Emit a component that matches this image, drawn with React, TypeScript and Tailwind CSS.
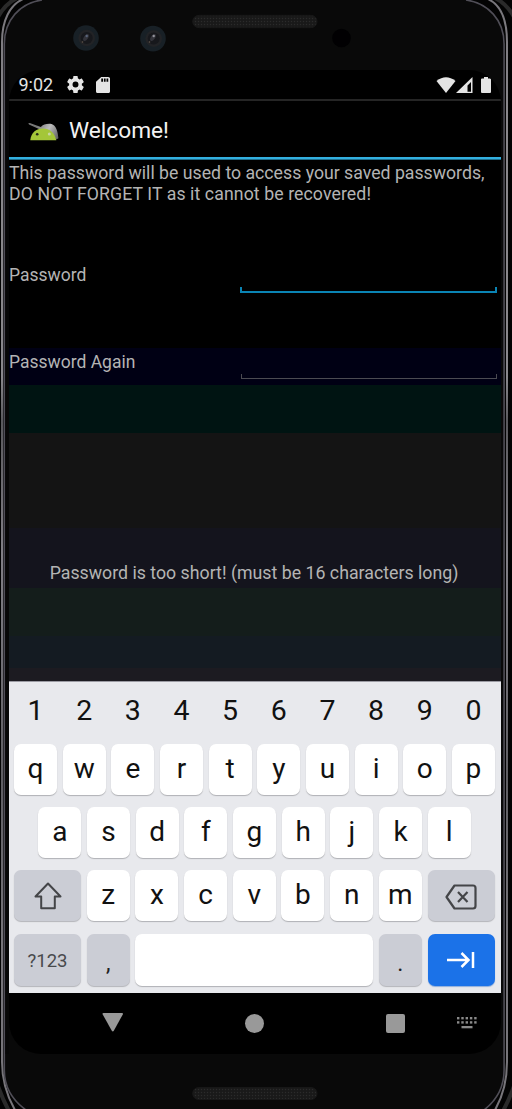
import React from "react";

function Frame() {
  return (
    <svg className="absolute inset-0" width="512" height="1109" viewBox="0 0 512 1109" fill="none">
      <defs>
        <linearGradient id="side" x1="0" y1="0" x2="0" y2="1109" gradientUnits="userSpaceOnUse">
          <stop offset="0" stopColor="#77757a" />
          <stop offset=".1" stopColor="#8a888c" />
          <stop offset=".34" stopColor="#8a888c" />
          <stop offset=".38" stopColor="#5a595d" />
          <stop offset=".5" stopColor="#828086" />
          <stop offset=".7" stopColor="#5f5e63" />
          <stop offset=".85" stopColor="#77757a" />
          <stop offset="1" stopColor="#77757a" />
        </linearGradient>
        <pattern id="mesh" width="3" height="3" patternUnits="userSpaceOnUse">
          <rect width="3" height="3" fill="#1b1b1b" />
          <rect width="1" height="1" fill="#2b2b2b" />
          <rect x="1.5" y="1.5" width="1" height="1" fill="#121212" />
        </pattern>
      </defs>
      <rect width="512" height="1109" fill="#030303" />
      <path d="M17-2Q5 4-2 17M495-2Q507 4 514 17M-2 1086Q3 1100 9 1111M514 1086Q509 1100 503 1111" stroke="#2a2a2a" strokeWidth="4" />
      <rect x="4" y="-0.5" width="500.500" height="1116" rx="44" fill="#090909" />
      <path d="M23-1C10 5 2 20 2 42V1062C2 1080 7 1096 15 1110" stroke="url(#side)" strokeWidth="2" />
      <path d="M488-1C501 5 507 20 507 42V1062C507 1080 503 1096 495 1110" stroke="url(#side)" strokeWidth="2" />
      <path d="M42 0C20 3 4.300 20 4.300 44V1070C4.300 1087 12 1100 26 1110M466 0C488 3 504.100 20 504.100 44V1070C504.100 1087 497 1100 484 1110" stroke="#504e57" strokeWidth="1.600" />
      <rect x="5.5" y="70" width="3.5" height="984" fill="#070707" />
      {[86, 153].map((x, i) => (
        <g key={x}>
          <circle cx={x} cy={38 + i * 0.6} r="12.8" fill="#182026" />
          <circle cx={x + 0.7} cy={38 + i * 0.6} r="8.3" fill="#222326" />
          <circle cx={x + 0.7} cy={38 + i * 0.6} r="6" fill="#17181c" />
          <ellipse cx={x} cy="37.5" rx="4" ry="2" fill="#34343b" transform={`rotate(-55 ${x} 37.5)`} />
          <circle cx={x + 0.7} cy="36" r="1.2" fill={i ? "#92929a" : "#59647a"} />
          <circle cx={x - 3.5} cy="42" r=".8" fill="#65584d" />
        </g>
      ))}
      <circle cx="341.5" cy="38" r="9.3" fill="#010002" />
      <rect x="192.7" y="15.3" width="124.3" height="12.4" rx="6.2" fill="url(#mesh)" stroke="#171717" />
      <rect x="192.7" y="1087.5" width="124.3" height="12" rx="6" fill="url(#mesh)" stroke="#171717" />
    </svg>
  );
}

function StatusBar() {
  return (
    <div className="flex h-[29px] shrink-0 items-center pl-[9.500px] pr-[10px]">
      <span className="w-[48px] text-[18px] leading-[30px] text-[#e4e4e4]">9:02</span>
      <svg width="17" height="17" viewBox="2 2 20 20" fill="#e4e4e4">
        <path d="M19.43 12.98c.04-.32.07-.64.07-.98s-.03-.66-.07-.98l2.11-1.65c.19-.15.24-.42.12-.64l-2-3.46c-.12-.22-.39-.3-.61-.22l-2.49 1c-.52-.4-1.08-.73-1.69-.98l-.38-2.65A.49.49 0 0 0 14 2h-4c-.25 0-.46.18-.49.42l-.38 2.65c-.61.25-1.17.59-1.69.98l-2.49-1c-.23-.09-.49 0-.61.22l-2 3.46c-.13.22-.07.49.12.64l2.11 1.65c-.04.32-.07.65-.07.98s.03.66.07.98l-2.11 1.65c-.19.15-.24.42-.12.64l2 3.46c.12.22.39.3.61.22l2.49-1c.52.4 1.08.73 1.69.98l.38 2.65c.03.24.24.42.49.42h4c.25 0 .46-.18.49-.42l.38-2.65c.61-.25 1.17-.59 1.69-.98l2.49 1c.23.09.49 0 .61-.22l2-3.46c.12-.22.07-.49-.12-.64l-2.11-1.65zM12 15.500a3.500 3.500 0 1 1 0-7 3.500 3.500 0 0 1 0 7z" />
      </svg>
      <svg className="ml-[12.500px]" width="14" height="16" viewBox="4 2 16 20" preserveAspectRatio="none" fill="#e4e4e4">
        <path d="M18 2h-8L4.020 8 4 20c0 1.100.9 2 2 2h12c1.100 0 2-.9 2-2V4c0-1.100-.9-2-2-2zm-6 6h-2V4h2v4zm3 0h-2V4h2v4zm3 0h-2V4h2v4z" />
      </svg>
      <span className="flex-1" />
      <svg className="-ml-px" width="20" height="16" viewBox="0 0 20 16" fill="#e4e4e4">
        <path d="M.5 4Q10-3.500 19.500 4L10 16Z" />
      </svg>
      <svg width="17" height="16" viewBox="0 0 17 16" fill="#e4e4e4">
        <path fillRule="evenodd" d="M0 16L16.500 0v16Zm11.500-1.200h3.500V5l-3.500 3.500Z" />
      </svg>
      <svg className="ml-[8.500px]" width="10" height="16" viewBox="0 0 10 16" fill="#e4e4e4">
        <path d="M3 0h4v1.600h2q1 0 1 1V15q0 1-1 1H1q-1 0-1-1V2.600q0-1 1-1h2Z" />
      </svg>
    </div>
  );
}

function AppIcon() {
  return (
    <svg className="mt-[6px]" width="32" height="20" viewBox="0 0 32 20">
      <defs>
        <linearGradient id="cap" x1="10" y1="2" x2="30" y2="14" gradientUnits="userSpaceOnUse">
          <stop stopColor="#777" />
          <stop offset=".5" stopColor="#bcbcbc" />
          <stop offset="1" stopColor="#686868" />
        </linearGradient>
      </defs>
      <path d="M.3 1.200 1.800 1l11 4C15 2.300 19 1.400 23.500 1.900c4.500 1.300 6.400 7 6.900 14.300l-2 1.400L17 8 11 7 1 2.500Z" fill="url(#cap)" />
      <path d="M2.300 18.300C3 11 8 6.600 15 6.600s11.500 4.500 13.300 11.700Z" fill="#a4c639" />
      <circle cx="9.200" cy="12.300" r="1.300" fill="#252b18" />
      <circle cx="21.300" cy="12" r="1.500" fill="#c7d6a0" />
    </svg>
  );
}

function Field({ active }: { active?: boolean }) {
  return active ? (
    <div className="h-[6px] w-[257px] border-x-2 border-b-2 border-[#0a84b4]" />
  ) : (
    <div className="h-[5px] w-[256px] border border-t-0 border-[#4b4b52]" />
  );
}

function Key({ label }: { label: string }) {
  return (
    <div className="flex h-[51px] w-[43px] items-center justify-center rounded-[7px] bg-white pb-px text-[28px] text-[#111] shadow-[0_1px_1px_#b0b1b5]">
      {label}
    </div>
  );
}

const grey = "flex items-center justify-center rounded-[7px] bg-[#cbcdd5] shadow-[0_1px_1px_#b4b5ba]";

function Row({ keys }: { keys: string }) {
  return (
    <>
      {keys.split("").map((k) => (
        <Key key={k} label={k} />
      ))}
    </>
  );
}

function Keyboard() {
  return (
    <div className="flex h-[312px] shrink-0 flex-col border-t border-[#9b9ba3] bg-[#e8e9ed] pl-[5px] pr-[6px]">
      <div className="flex h-[62px] justify-between pt-[9px] text-[28.500px] leading-[40px] text-[#111]">
        {"1234567890".split("").map((d) => (
          <span key={d} className="w-[43px] text-center">{d}</span>
        ))}
      </div>
      <div className="flex h-[63px] justify-between"><Row keys="qwertyuiop" /></div>
      <div className="flex h-[63px] justify-between px-[24.300px]"><Row keys="asdfghjkl" /></div>
      <div className="flex h-[64px] justify-between">
        <div className={`${grey} h-[51px] w-[67px]`}>
          <svg width="28" height="28" viewBox="0 0 28 28" fill="none" stroke="#444548" strokeWidth="2" strokeLinejoin="round">
            <path d="M14 1.500 1.500 14.500h5.700v11.800h13.600V14.500h5.700Z" />
          </svg>
        </div>
        <Row keys="zxcvbnm" />
        <div className={`${grey} h-[51px] w-[67.500px]`}>
          <svg className="mt-[2px]" width="32" height="26" viewBox="0 0 32 26" fill="none" stroke="#444548" strokeWidth="2.200" strokeLinejoin="round">
            <path d="M9.500 1.500H28q2.500 0 2.500 2.500v18q0 2.500-2.500 2.500H9.500L1.500 13Z M13 8l9.500 10M22.500 8 13 18" />
          </svg>
        </div>
      </div>
      <div className="flex gap-[5.700px]">
        <div className={`${grey} h-[52px] w-[67px] pt-[3px] text-[18.500px] text-[#48494c]`}>?123</div>
        <div className={`${grey} h-[52px] w-[43px] pt-[9px] text-[23px] text-[#222]`}>,</div>
        <div className="h-[52px] flex-1 rounded-[7px] bg-white shadow-[0_1px_1px_#b0b1b5]" />
        <div className={`${grey} h-[52px] w-[43px] pt-[9px] text-[23px] text-[#222]`}>.</div>
        <div className="flex h-[52px] w-[67.500px] items-center justify-center rounded-[7px] bg-[#1b72e8] shadow-[0_1px_1px_#8faedb]">
          <svg width="28" height="16" viewBox="0 0 28 16" fill="none" stroke="#fff" strokeWidth="2.500">
            <path d="M0 8h21M14.500 1l7 7-7 7M26 0v16" />
          </svg>
        </div>
      </div>
    </div>
  );
}

function NavBar() {
  return (
    <div className="flex h-[60px] items-center">
      <svg className="-mt-[2px] ml-[93px]" width="22" height="19" viewBox="0 0 22 19" fill="#999">
        <path d="M1.500 0h18.500q1.500 0 .8 1.400l-9 16.400q-1 1.200-2 0L.7 1.400Q0 0 1.500 0Z" />
      </svg>
      <div className="ml-[121px] size-[19px] rounded-full bg-[#999]" />
      <div className="ml-[122px] size-[19px] rounded-[2px] bg-[#999]" />
      <svg className="ml-[52px]" width="20" height="12" viewBox="0 0 20 12" fill="#8a8a8a">
        {[0, 1, 2, 3, 4].map((c) => (
          <g key={c}>
            <rect x={c * 4.3} y="0" width="2.400" height="2.400" />
            <rect x={c * 4.3} y="4.200" width="2.400" height="2.400" />
          </g>
        ))}
        <rect x="4.500" y="9" width="11" height="2.300" />
      </svg>
    </div>
  );
}

export default function App() {
  return (
    <div className="relative h-[1109px] w-[512px] overflow-hidden bg-black px-[9px] pt-[70px] font-['Roboto',sans-serif]">
      <Frame />
      <div className="relative flex h-[984px] w-[492px] flex-col overflow-hidden rounded-[32px] bg-black">
        <StatusBar />
        <div className="h-[2px] shrink-0 bg-[#252525]" />
        <div className="flex h-[56px] shrink-0 items-center pl-[19px]">
          <AppIcon />
          <span className="ml-[9px] pt-[4px] text-[22.700px] text-[#f2f2f2]">Welcome!</span>
        </div>
        <div className="h-[3px] shrink-0 border-b border-[#1e6e8c] bg-[#33b0e0]" />
        <div className="flex h-[188px] shrink-0 flex-col pt-[3px] text-[17.700px] leading-[21px] text-[#b4b4b4]">
          <p className="whitespace-nowrap">
            This password will be used to access your saved passwords,
            <br />
            <span className="tracking-[0.090px]">DO NOT FORGET IT as it cannot be recovered!</span>
          </p>
          <div className="mt-[59px] flex h-[29px] items-end">
            <span className="w-[231px] self-start pt-px text-[17.500px]">Password</span>
            <Field active />
          </div>
        </div>
        <div className="flex h-[37px] shrink-0 items-end bg-[#000014] pb-[6px] text-[17.500px] leading-[21px] text-[#b4b4b4]">
          <span className="w-[231.500px] self-start pt-[4px]">Password Again</span>
          <Field />
        </div>
        <div className="h-[48px] shrink-0 bg-[#001412]" />
        <div className="h-[95px] shrink-0 bg-[#141414]" />
        <div className="h-[60px] shrink-0 whitespace-nowrap bg-[#14141d] pr-[2px] pt-[35px] text-center text-[17.750px] leading-[21px] text-[#b4b4b4]">
          Password is too short! (must be 16 characters long)
        </div>
        <div className="h-[48px] shrink-0 bg-[#141d1b]" />
        <div className="h-[32px] shrink-0 bg-[#141b22]" />
        <div className="h-[13px] shrink-0 bg-[#1c1b21]" />
        <Keyboard />
        <NavBar />
      </div>
    </div>
  );
}
